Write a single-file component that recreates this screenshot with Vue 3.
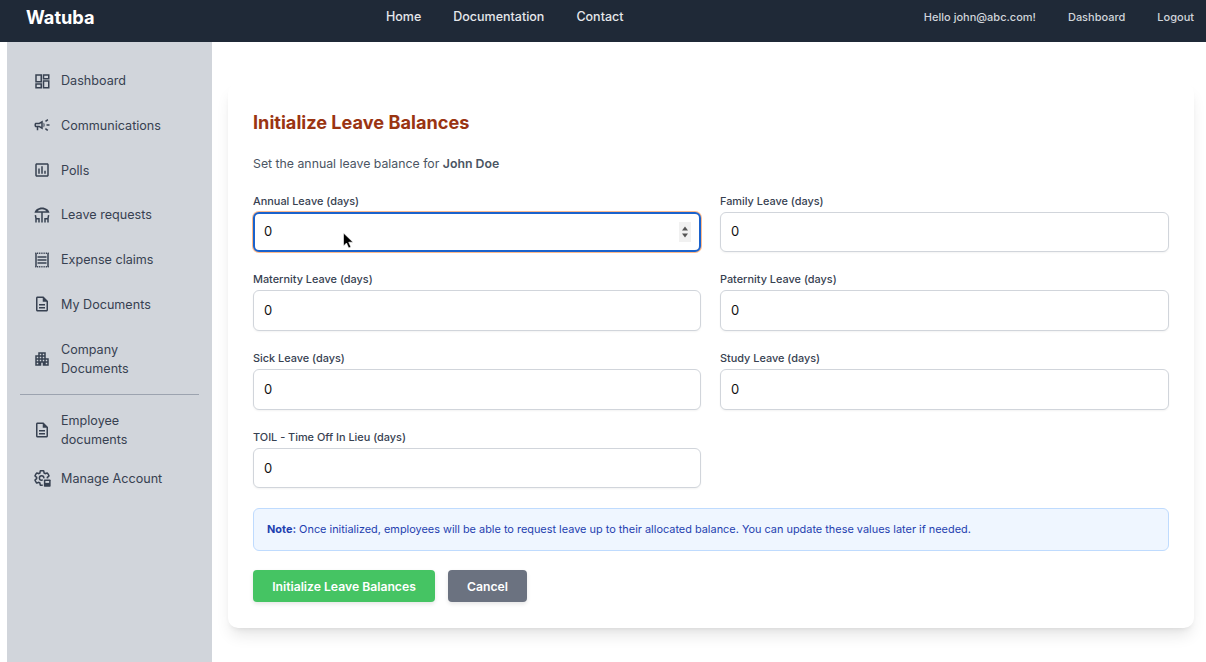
<template>
  <div class="page">
    <header class="topbar">
      <div class="brand">Watuba</div>
      <nav class="main-nav">
        <a v-for="link in mainLinks" :key="link">{{ link }}</a>
      </nav>
      <div class="user-nav">
        <a v-for="link in userLinks" :key="link">{{ link }}</a>
      </div>
    </header>

    <div class="body">
      <aside class="sidebar">
        <ul class="side-list upper">
          <li v-for="item in upperItems" :key="item.label" class="side-item">
            <svg class="side-icon" viewBox="0 0 24 24" v-html="item.icon"></svg>
            <span class="side-label">{{ item.label }}</span>
          </li>
        </ul>
        <div class="side-divider"></div>
        <ul class="side-list">
          <li v-for="item in lowerItems" :key="item.label" class="side-item">
            <svg class="side-icon" viewBox="0 0 24 24" v-html="item.icon"></svg>
            <span class="side-label">{{ item.label }}</span>
          </li>
        </ul>
      </aside>

      <main class="content">
        <section class="card">
          <h1 class="title">Initialize Leave Balances</h1>
          <p class="intro">Set the annual leave balance for <strong>John Doe</strong></p>

          <form class="fields" @submit.prevent>
            <div v-for="field in fields" :key="field.label" class="field">
              <label class="field-label">{{ field.label }}</label>
              <div class="input-wrap" :class="{ focused: field.focused }">
                <input class="field-input" type="text" :value="field.value" readonly />
                <template v-if="field.focused">
                  <span class="spinner">
                    <svg viewBox="0 0 12 18" width="12" height="18">
                      <path d="M6 3.5 9 7.5H3z" fill="#555" />
                      <path d="M6 14.5 9 10.5H3z" fill="#555" />
                    </svg>
                  </span>
                  <svg class="pointer" viewBox="0 0 12 18" width="12" height="18">
                    <path d="M1.5 1v13l3-3 2.2 5 2.2-1-2.2-4.8h4.3z" fill="#000" stroke="#fff" stroke-width="0.6" />
                  </svg>
                </template>
              </div>
            </div>
          </form>

          <div class="note">
            <strong>Note:</strong> Once initialized, employees will be able to request leave up to their allocated balance. You can update these values later if needed.
          </div>

          <div class="actions">
            <button class="btn btn-green">Initialize Leave Balances</button>
            <button class="btn btn-gray">Cancel</button>
          </div>
        </section>
      </main>
    </div>
  </div>
</template>

<script setup>
const mainLinks = ["Home", "Documentation", "Contact"];
const userLinks = ["Hello john@abc.com!", "Dashboard", "Logout"];

const docIcon =
  '<path fill="currentColor" d="M8 16h8v2H8zm0-4h8v2H8zm6-10H6c-1.1 0-2 .9-2 2v16c0 1.1.89 2 1.99 2H18c1.1 0 2-.9 2-2V8l-6-6zm4 18H6V4h7v5h5v11z"/>';

const upperItems = [
  {
    label: "Dashboard",
    icon: '<path fill="none" stroke="currentColor" stroke-width="2" d="M4 4h7v9H4zM14 4h7v5h-7zM14 12h7v9h-7zM4 16h7v5H4z"/>',
  },
  {
    label: "Communications",
    icon: '<path fill="currentColor" d="M18 11v2h4v-2h-4zm-2 6.61c.96.71 2.21 1.65 3.2 2.39.4-.53.8-1.07 1.2-1.6-.99-.74-2.24-1.68-3.2-2.4-.4.54-.8 1.08-1.2 1.61zM20.4 5.6c-.4-.53-.8-1.07-1.2-1.6-.99.74-2.24 1.68-3.2 2.4.4.53.8 1.07 1.2 1.6.96-.72 2.21-1.65 3.2-2.4zM4 9c-1.1 0-2 .9-2 2v2c0 1.1.9 2 2 2h1v4h2v-4h1l5 3V6L8 9H4zm5.03 1.71L11 9.53v4.94l-1.97-1.18-.48-.29H4v-2h4.55l.48-.29zM15.5 12c0-1.33-.58-2.53-1.5-3.35v6.69c.92-.81 1.5-2.01 1.5-3.34z"/>',
  },
  {
    label: "Polls",
    icon: '<path fill="currentColor" d="M19 3H5c-1.1 0-2 .9-2 2v14c0 1.1.9 2 2 2h14c1.1 0 2-.9 2-2V5c0-1.1-.9-2-2-2zm0 16H5V5h14v14zM7 10h2v7H7zm4-3h2v10h-2zm4 6h2v4h-2z"/>',
  },
  {
    label: "Leave requests",
    icon: '<path fill="currentColor" d="M22 9c-.6-3.8-4.9-7-10-7S2.600 5.200 2 9h9v13h2V9h9zM12 4.300c2.500 0 4.700 1.100 5.900 2.700H6.100C7.300 5.400 9.500 4.300 12 4.300zM4.140 12l-1.960.37.820 4.370V22h2l.020-4H7v4h2v-6H4.900l-.760-4zM19.100 16H15v6h2v-4h1.980l.020 4h2v-5.260l.820-4.370L19.860 12l-.760 4z"/>',
  },
  {
    label: "Expense claims",
    icon: '<path fill="none" stroke="currentColor" stroke-width="2" stroke-dasharray="1.4 1" d="M3 3h18M3 21h18"/><path fill="none" stroke="currentColor" stroke-width="2" d="M4 3v18M20 3v18M6 8h12M6 12h12M6 16h12"/>',
  },
  { label: "My Documents", icon: docIcon },
  {
    label: "Company Documents",
    icon: '<path fill="currentColor" d="M17 11V3H7v4H3v14h8v-4h2v4h8V11h-4zM7 19H5v-2h2v2zm0-4H5v-2h2v2zm0-4H5V9h2v2zm4 4H9v-2h2v2zm0-4H9V9h2v2zm0-4H9V5h2v2zm4 8h-2v-2h2v2zm0-4h-2V9h2v2zm0-4h-2V5h2v2zm4 12h-2v-2h2v2zm0-4h-2v-2h2v2z"/>',
  },
];

const lowerItems = [
  { label: "Employee documents", icon: docIcon },
  {
    label: "Manage Account",
    icon: '<path fill="none" stroke="currentColor" stroke-width="2" d="M19.14 12.94c.04-.3.06-.61.06-.94 0-.32-.02-.64-.07-.94l2.03-1.58c.18-.14.23-.41.12-.61l-1.92-3.32c-.12-.22-.37-.29-.59-.22l-2.39.96c-.5-.38-1.03-.7-1.62-.94l-.36-2.54c-.04-.24-.24-.41-.48-.41h-3.84c-.24 0-.43.17-.47.41l-.36 2.54c-.59.24-1.13.57-1.62.94l-2.39-.96c-.22-.08-.47 0-.59.22L2.74 8.87c-.12.21-.08.47.12.61l2.03 1.58c-.05.3-.09.63-.09.94s.02.64.07.94l-2.03 1.58c-.18.14-.23.41-.12.61l1.92 3.32c.12.22.37.29.59.22l2.39-.96c.5.38 1.03.7 1.62.94l.36 2.54c.05.24.24.41.48.41h3.84c.24 0 .44-.17.47-.41l.36-2.54c.59-.24 1.13-.56 1.62-.94l2.39.96c.22.08.47 0 .59-.22l1.92-3.32c.12-.22.07-.47-.12-.61l-2.01-1.58z"/><circle cx="11.5" cy="12" r="3" fill="none" stroke="currentColor" stroke-width="2"/><rect x="13" y="12.5" width="11" height="11.5" fill="#d1d5db"/><rect x="14.5" y="14" width="9" height="9.5" rx="1" fill="currentColor"/><rect x="16.5" y="16" width="5" height="2.5" fill="#d1d5db"/>',
  },
];

const fields = [
  { label: "Annual Leave (days)", value: "0", focused: true },
  { label: "Family Leave (days)", value: "0" },
  { label: "Maternity Leave (days)", value: "0" },
  { label: "Paternity Leave (days)", value: "0" },
  { label: "Sick Leave (days)", value: "0" },
  { label: "Study Leave (days)", value: "0" },
  { label: "TOIL - Time Off In Lieu (days)", value: "0" },
];
</script>

<style scoped>
.page {
  width: 1206px;
  height: 662px;
  overflow: hidden;
  background: #fff;
  font-family: Inter, "Liberation Sans", sans-serif;
  display: flex;
  flex-direction: column;
}

.topbar {
  height: 42px;
  flex: none;
  background: #1f2937;
  display: flex;
  align-items: flex-start;
  justify-content: space-between;
  padding: 0 12px 0 26px;
  box-sizing: border-box;
}

.brand {
  color: #fff;
  font-size: 18.2px;
  font-weight: 700;
  line-height: 34px;
}

.main-nav {
  display: flex;
  gap: 32px;
  margin-left: -9px;
  color: #e5e7eb;
  font-size: 12.5px;
  font-weight: 500;
  line-height: 33px;
}

.user-nav {
  display: flex;
  gap: 32px;
  color: #d1d5db;
  font-size: 11px;
  font-weight: 500;
  line-height: 34px;
}

.body {
  flex: 1;
  display: flex;
  min-height: 0;
}

.sidebar {
  width: 205px;
  margin-left: 7px;
  flex: none;
  background: #d1d5db;
  padding: 19px 13px 0;
  box-sizing: border-box;
  color: #374151;
}

.side-list {
  list-style: none;
  margin: 0;
  padding: 0;
}

.side-list.upper {
  display: flex;
  flex-direction: column;
  gap: 5.8px;
}

.side-item {
  display: flex;
  align-items: center;
  gap: 10px;
  padding: 10px 0 10px 13px;
}

.side-icon {
  width: 18px;
  height: 18px;
  flex: none;
}

.side-label {
  font-size: 12.6px;
  line-height: 19px;
  width: 105px;
}

.side-divider {
  height: 1px;
  background: #9ca3af;
  margin: 6px 0;
}

.content {
  flex: 1;
  min-width: 0;
  padding: 41px 12px 0 16px;
}

.card {
  background: #fff;
  border-radius: 10px;
  box-shadow: 0 10px 15px -3px rgba(0, 0, 0, 0.1), 0 4px 6px -4px rgba(0, 0, 0, 0.1);
  padding: 27px 25px 26px;
}

.title {
  margin: 0;
  font-size: 18.15px;
  line-height: 24px;
  font-weight: 700;
  color: #9a3412;
}

.intro {
  margin: 21px 0 0;
  font-size: 12.3px;
  line-height: 18px;
  color: #4b5563;
}

.intro strong {
  font-weight: 600;
}

.fields {
  margin-top: 19.7px;
  display: grid;
  grid-template-columns: 448px 449px;
  column-gap: 19px;
  row-gap: 19.25px;
}

.field-label {
  display: block;
  font-size: 10.9px;
  line-height: 16px;
  font-weight: 500;
  color: #374151;
  margin-bottom: 3px;
}

.input-wrap {
  position: relative;
}

.field-input {
  display: block;
  width: 100%;
  height: 40.5px;
  box-sizing: border-box;
  border: 1px solid #d1d5db;
  border-radius: 6px;
  box-shadow: 0 1px 2px rgba(0, 0, 0, 0.05);
  padding: 0 10px 1px;
  font: 400 13px Inter, "Liberation Sans", sans-serif;
  color: #111;
  background: #fff;
  outline: none;
}

.focused .field-input {
  border: 2px solid #1a62cc;
  padding: 0 9px 1px;
  box-shadow: 0 0 0 1px #fdba8c;
}

.spinner {
  position: absolute;
  right: 10px;
  top: 10px;
  width: 12px;
  height: 20px;
  background: #f1f1f1;
  display: flex;
  align-items: center;
}

.pointer {
  position: absolute;
  left: 89px;
  top: 20px;
}

.note {
  margin-top: 19.3px;
  background: #eff6ff;
  border: 1px solid #bfdbfe;
  border-radius: 6px;
  padding: 11.5px 13px;
  font-size: 10.92px;
  line-height: 18px;
  color: #1e40af;
}

.note strong {
  font-weight: 700;
}

.actions {
  margin-top: 19px;
  display: flex;
  gap: 13px;
}

.btn {
  height: 32px;
  border: none;
  border-radius: 4px;
  padding: 1px 0 0;
  color: #fff;
  font: 600 12.2px Inter, "Liberation Sans", sans-serif;
  box-shadow: 0 2px 4px rgba(0, 0, 0, 0.1);
}

.btn-green {
  width: 182px;
  background: #45c463;
}

.btn-gray {
  width: 79px;
  background: #6b7280;
}
</style>
